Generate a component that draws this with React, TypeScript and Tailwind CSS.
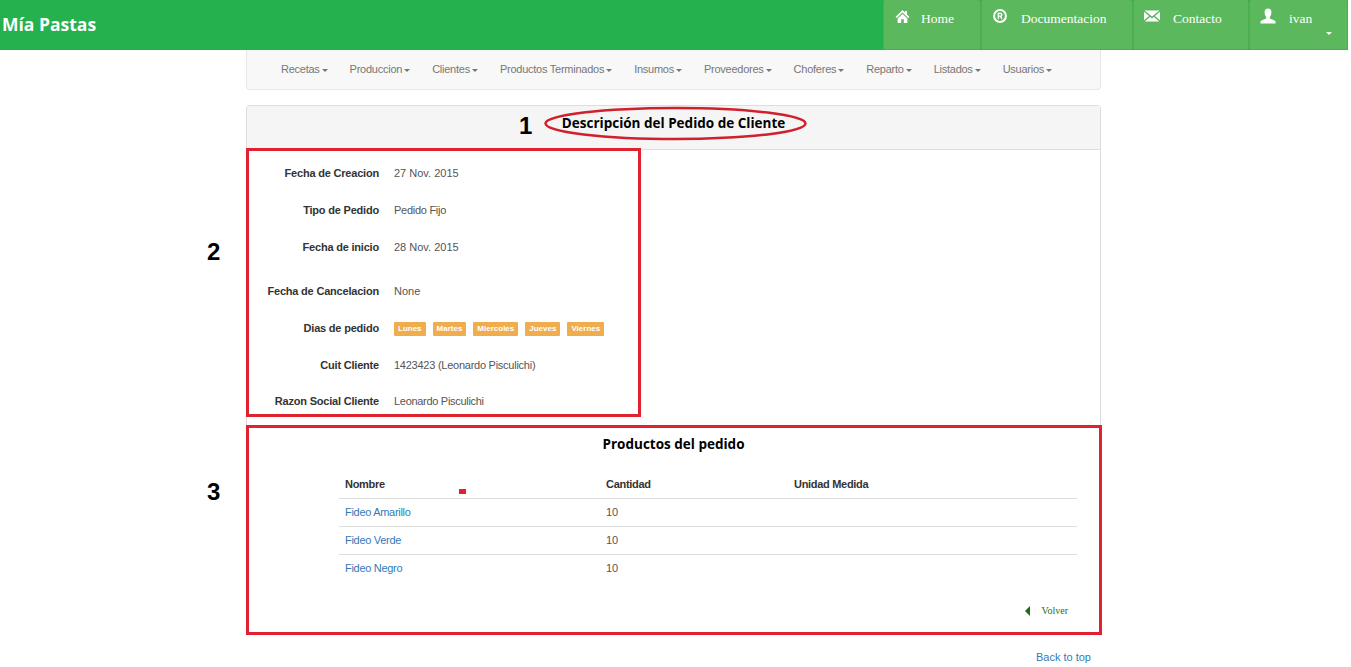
import React from 'react';

const menu = ['Recetas', 'Produccion', 'Clientes', 'Productos Terminados', 'Insumos', 'Proveedores', 'Choferes', 'Reparto', 'Listados', 'Usuarios'];

const details = [
  { label: 'Fecha de Creacion', value: '27 Nov. 2015', cls: 'h-[37px]' },
  { label: 'Tipo de Pedido', value: 'Pedido Fijo', cls: 'h-[37px] [&>span+span]:tracking-[-0.27px]' },
  { label: 'Fecha de inicio', value: '28 Nov. 2015', cls: 'h-[44px] pb-[7px]' },
  { label: 'Fecha de Cancelacion', value: 'None', cls: 'h-[37px]' },
  { label: 'Dias de pedido', days: ['Lunes', 'Martes', 'Miercoles', 'Jueves', 'Viernes'], cls: 'h-[37px]' },
  { label: 'Cuit Cliente', value: '1423423 (Leonardo Pisculichi)', cls: 'h-[37px] [&>span+span]:tracking-[-0.25px]' },
  { label: 'Razon Social Cliente', value: 'Leonardo Pisculichi', cls: 'h-[35px] [&>span+span]:tracking-[-0.3px]' },
];

const products = ['Fideo Amarillo', 'Fideo Verde', 'Fideo Negro'];

const HomeIcon = () => (
  <svg viewBox="0 0 16 16" className="w-[15px] h-[15px] fill-white">
    <path d="M8 1 L0.5 8.5 L2 9.5 L8 3.8 L14 9.5 L15.5 8.5 L12.8 5.8 V2 H10.8 V3.8 Z" />
    <path d="M8 5.2 L2.8 10 V15 H6.6 V11 H9.4 V15 H13.2 V10 Z" />
  </svg>
);

const RegisteredIcon = () => (
  <svg viewBox="0 0 14 14" className="w-[14px] h-[14px] fill-none stroke-white">
    <circle cx="7" cy="7" r="5.9" strokeWidth="2" />
    <path d="M5.3 10 V4.4 H7.6 C9.2 4.4 9.2 7.2 7.6 7.2 H5.3 M7.4 7.2 L9 10" strokeWidth="1.3" />
  </svg>
);

const MailIcon = () => (
  <svg viewBox="0 0 16 12" className="w-[16px] h-[12px] fill-white">
    <path d="M0.5 0.5 H15.5 L8 6.5 Z" />
    <path d="M0 1.8 L5 6 L0 10.2 Z" />
    <path d="M16 1.8 L11 6 L16 10.2 Z" />
    <path d="M0.8 11.5 L6 7 L8 8.5 L10 7 L15.2 11.5 Z" />
  </svg>
);

const UserIcon = () => (
  <svg viewBox="0 0 16 16" className="w-[16px] h-[16px] fill-white">
    <path d="M8 0.5 C10.4 0.5 11.6 2.4 11.4 4.8 C11.3 6.6 10.6 8 9.8 9 V10.4 L15.5 13 V15.5 H0.5 V13 L6.2 10.4 V9 C5.4 8 4.7 6.6 4.6 4.8 C4.4 2.4 5.6 0.5 8 0.5 Z" />
  </svg>
);

const Caret = () => (
  <span className="inline-block ml-[2px] align-middle w-0 h-0 border-x-[3px] border-x-transparent border-t-[3px] border-t-[#777]" />
);

const NavTab = ({ icon, label, width, gap, caret }: { icon: React.ReactNode; label: string; width: string; gap: string; caret?: boolean }) => (
  <a className={`relative flex items-start h-[50px] pt-[9px] pl-[10px] bg-[#5cb85c] border border-t-0 border-[#4cae4c] text-white rounded-[2px] ${width}`}>
    <span className="flex w-[16px] h-[14px] items-center justify-center">{icon}</span>
    <span className={`mt-px text-[13.5px] leading-[18px] ${gap}`}>{label}</span>
    {caret && (
      <span className="absolute right-[15px] top-[32px] w-0 h-0 border-x-[3px] border-x-transparent border-t-[3px] border-t-white" />
    )}
  </a>
);

export default function App() {
  return (
    <div className="relative h-[667px] w-[1351px] overflow-hidden bg-white text-[11px] leading-[17px] text-[#555] font-['Liberation_Sans',Arial,sans-serif]">
      <header className="flex items-center justify-between w-[1348px] h-[50px] bg-[#25b14e] font-['Liberation_Serif',serif]">
        <span className="pl-[2px] pb-[2px] text-[17.5px] font-bold text-white font-['Open_Sans',sans-serif]">Mía Pastas</span>
        <nav className="flex">
          <NavTab icon={<HomeIcon />} label="Home" width="w-[98px]" gap="ml-[11px]" />
          <NavTab icon={<RegisteredIcon />} label="Documentacion" width="w-[152px]" gap="ml-[13px]" />
          <NavTab icon={<MailIcon />} label="Contacto" width="w-[116px]" gap="ml-[13px]" />
          <NavTab icon={<UserIcon />} label="ivan" width="w-[99px]" gap="ml-[13px]" caret />
        </nav>
      </header>

      <div className="w-[855px] ml-[246px]">
        <nav className="flex items-center gap-[22px] h-[40px] pl-[34px] bg-[#f8f8f8] border border-t-0 border-[#e7e7e7] rounded-b-[4px] text-[#777] tracking-[-0.25px] whitespace-nowrap">
          {menu.map(item => (
            <a key={item}>
              {item}
              <Caret />
            </a>
          ))}
        </nav>

        <section className="mt-[15px] h-[528px] border border-[#ddd] rounded-[3px]">
          <h2 className="flex items-center justify-center h-[44px] pb-[9px] bg-[#f5f5f5] border-b border-[#ddd] text-[13.5px] font-bold text-black font-['Open_Sans',sans-serif]">
            Descripción del Pedido de Cliente
          </h2>

          <div className="pt-[5px]">
            {details.map(row => (
              <div key={row.label} className={`flex items-center ${row.cls}`}>
                <span className="w-[132px] text-right font-bold text-[#333] tracking-[-0.2px]">{row.label}</span>
                <span className="ml-[15px] flex gap-[7px]">
                  {row.value}
                  {row.days?.map(day => (
                    <span key={day} className="px-[4px] h-[14px] bg-[#f0ad4e] text-white text-[8px] leading-[14px] font-bold rounded-[1px]">
                      {day}
                    </span>
                  ))}
                </span>
              </div>
            ))}
          </div>

          <h3 className="mt-[17px] text-center text-[13.5px] font-bold text-black font-['Open_Sans',sans-serif]">Productos del pedido</h3>

          <table className="mt-[18px] ml-[92px] w-[738px] table-fixed border-collapse text-left">
            <thead>
              <tr className="h-[27px] border-b border-[#ddd] text-[#333] tracking-[-0.3px]">
                <th className="w-[261px] pl-[6px] font-bold">Nombre</th>
                <th className="w-[188px] pl-[6px] font-bold">Cantidad</th>
                <th className="pl-[6px] font-bold">Unidad Medida</th>
              </tr>
            </thead>
            <tbody>
              {products.map((name, i) => (
                <tr key={name} className={`h-[28px] ${i < products.length - 1 ? 'border-b border-[#ddd]' : ''}`}>
                  <td className="pl-[6px] text-[#337ab7] tracking-[-0.3px]">{name}</td>
                  <td className="pl-[6px]">10</td>
                  <td />
                </tr>
              ))}
            </tbody>
          </table>

          <div className="mt-[20px] flex items-center justify-end pr-[32px] text-[10px] text-[#1d6b1d] font-['Liberation_Serif',serif]">
            <span className="w-0 h-0 border-y-[5px] border-y-transparent border-r-[5px] border-r-[#1d6b1d]" />
            <a className="ml-[12px]">Volver</a>
          </div>
        </section>

        <div className="mt-[16px] pr-[10px] text-right text-[11px] text-[#337ab7]">Back to top</div>
      </div>

      {/* annotations drawn over the screenshot */}
      <div className="absolute left-[246px] top-[148px] w-[395px] h-[269px] border-[3px] border-[#e0212f]" />
      <div className="absolute left-[246px] top-[425px] w-[856px] h-[210px] border-[3px] border-[#e0212f]" />
      <div className="absolute left-[459px] top-[489px] w-[7px] h-[5px] bg-[#e0212f]" />
      <svg className="absolute left-[543px] top-[106px]" width="265" height="35" viewBox="0 0 265 35">
        <ellipse cx="132.5" cy="17.5" rx="130" ry="15.5" fill="none" stroke="#d0202c" strokeWidth="2.5" />
      </svg>
      <span className="absolute left-[519px] top-[112px] text-[24px] leading-[28px] font-bold text-black">1</span>
      <span className="absolute left-[207px] top-[238px] text-[24px] leading-[28px] font-bold text-black">2</span>
      <span className="absolute left-[207px] top-[478px] text-[24px] leading-[28px] font-bold text-black">3</span>
    </div>
  );
}
